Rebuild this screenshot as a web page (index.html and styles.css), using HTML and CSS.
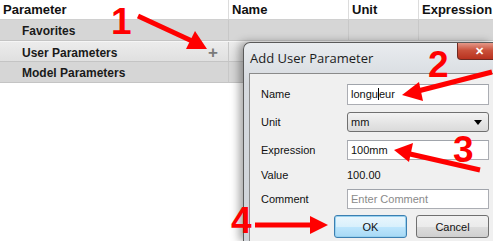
FILE: index.html
```html
<!DOCTYPE html>
<html lang="en">
<head>
    <meta charset="UTF-8">
    <title>Parameters</title>
    <link rel="stylesheet" href="styles.css">
</head>
<body>
    <!-- Parameter table -->
    <div class="grid">
        <div class="head">
            <div class="col c1">Parameter</div>
            <div class="col c2">Name</div>
            <div class="col c3">Unit</div>
            <div class="col c4">Expression</div>
        </div>
        <div class="row">
            <div class="col c1"><span class="group">Favorites</span></div>
            <div class="col c2"></div>
            <div class="col c3"></div>
            <div class="col c4"></div>
        </div>
        <div class="row current">
            <div class="col c1"><span class="group">User Parameters</span><span class="plus">+</span></div>
            <div class="col c2"></div>
            <div class="col c3"></div>
            <div class="col c4"></div>
        </div>
        <div class="row">
            <div class="col c1"><span class="group">Model Parameters</span></div>
            <div class="col c2"></div>
            <div class="col c3"></div>
            <div class="col c4"></div>
        </div>
    </div>

    <!-- Add User Parameter dialog -->
    <div class="dialog">
        <div class="titlebar">
            <span class="title">Add User Parameter</span>
            <button class="close">&#x2715;</button>
        </div>
        <div class="body">
            <div class="field">
                <label>Name</label>
                <div class="input">longu<span class="caret"></span>eur</div>
            </div>
            <div class="field">
                <label>Unit</label>
                <div class="select">mm<span class="arrow"></span></div>
            </div>
            <div class="field">
                <label>Expression</label>
                <div class="input">100mm</div>
            </div>
            <div class="field value">
                <label>Value</label>
                <span>100.00</span>
            </div>
            <div class="field">
                <label>Comment</label>
                <div class="input placeholder">Enter Comment</div>
            </div>
            <div class="buttons">
                <button class="btn ok">OK</button>
                <button class="btn">Cancel</button>
            </div>
        </div>
    </div>

    <!-- Red annotations -->
    <svg class="notes" width="493" height="241" viewBox="0 0 493 241">
        <g fill="#ff0000" stroke="#ff0000">
            <line x1="138" y1="16" x2="192" y2="41" stroke-width="5"/>
            <polygon points="207,49 186,49 195,31" stroke="none"/>
            <line x1="492" y1="72" x2="418" y2="91" stroke-width="5"/>
            <polygon points="402,95 419,82 423,101" stroke="none"/>
            <line x1="480" y1="170" x2="410" y2="154" stroke-width="5"/>
            <polygon points="394,150 413,143 409,162" stroke="none"/>
            <line x1="255" y1="225" x2="312" y2="225" stroke-width="5"/>
            <polygon points="328,225 310,216 310,234" stroke="none"/>
        </g>
        <g class="num">
            <text x="111" y="34">1</text>
            <text x="428" y="77">2</text>
            <text x="453" y="162">3</text>
            <text x="231" y="233">4</text>
        </g>
    </svg>
</body>
</html>
```

FILE: styles.css
```css
body {
    margin: 0;
    width: 493px;
    height: 241px;
    overflow: hidden;
    position: relative;
    background: #fff;
    font-family: "Liberation Sans", Arial, sans-serif;
}

/* Table */
.grid {
    width: 493px;
}

.head, .row {
    display: flex;
}

.head {
    height: 19px;
    border-bottom: 1px solid #d0d0d0;
    font-weight: bold;
    font-size: 13px;
    color: #111;
}

.head .col {
    line-height: 19px;
    padding-left: 3px;
}

.col {
    box-sizing: border-box;
    border-right: 1px solid #dcdcdc;
}

.c1 { width: 229px; }
.c2 { width: 120px; }
.c3 { width: 70px; }
.c4 { flex: 1; border-right: none; }

.row {
    height: 20px;
    background: #d6d6d6;
    border-bottom: 1px solid #c4c4c4;
}

.row .col {
    border-right-color: #c8c8c8;
}

.row .c1 {
    margin-left: 18px;
    width: 211px;
    display: flex;
    align-items: center;
    justify-content: space-between;
    padding-left: 4px;
    padding-right: 10px;
    padding-top: 2px;
}

.row.current {
    background: linear-gradient(#ececec, #e0e0e0);
    border-top: 1px solid #f6f6f6;
    height: 19px;
}

.group {
    font-weight: bold;
    font-size: 12px;
    color: #1a1a1a;
}

.plus {
    font-size: 17px;
    font-weight: bold;
    color: #7a7a7a;
    line-height: 1;
}

/* Dialog */
.dialog {
    position: absolute;
    left: 243px;
    top: 42px;
    width: 250px;
    height: 199px;
    box-sizing: border-box;
    overflow: hidden;
    border: 1px solid #5a5a5a;
    border-right: none;
    border-bottom: none;
    border-radius: 7px 0 0 0;
    background: linear-gradient(#e9ecef, #d6dadf 40px, #cfd3d8);
    box-shadow: -4px 0 8px rgba(0, 0, 0, 0.35);
    padding-left: 5px;
    font-family: "Liberation Sans", Tahoma, sans-serif;
    font-size: 11px;
    color: #111;
}

.titlebar {
    height: 30px;
    display: flex;
    align-items: center;
    position: relative;
}

.title {
    font-family: "Open Sans", "Liberation Sans", sans-serif;
    font-size: 13px;
    color: #1c1c1c;
    padding-left: 1px;
}

.close {
    position: absolute;
    top: -1px;
    left: 208px;
    width: 44px;
    height: 18px;
    border: 1px solid #6e2a22;
    border-top: none;
    border-radius: 0 0 4px 4px;
    background: linear-gradient(#e8a293, #c9503a 50%, #b8321f);
    color: #fff;
    font-size: 11px;
    font-weight: bold;
    padding: 0;
    line-height: 16px;
}

.body {
    background: #f0f0f0;
    border: 1px solid #8a8a8a;
    border-right: none;
    border-bottom: none;
    height: 168px;
    box-sizing: border-box;
    padding: 9px 0 0 11px;
}

.field {
    display: flex;
    align-items: center;
    height: 22px;
    margin-bottom: 6px;
}

.field label {
    width: 86px;
    flex: none;
}

.input, .select {
    box-sizing: border-box;
    width: 142px;
    height: 20px;
    line-height: 18px;
    border: 1px solid #abadb3;
    border-top-color: #a0a4ab;
    background: #fff;
    padding-left: 3px;
}

.field:first-child .input {
    height: 21px;
}

.caret {
    display: inline-block;
    width: 1px;
    height: 12px;
    background: #000;
    vertical-align: -2px;
}

.select {
    position: relative;
    border-color: #707070;
    border-radius: 3px;
    background: linear-gradient(#f3f3f3, #e6e6e6 50%, #dadada);
}

.arrow {
    position: absolute;
    right: 6px;
    top: 7px;
    border-left: 4px solid transparent;
    border-right: 4px solid transparent;
    border-top: 5px solid #000;
}

.field.value {
    height: 16px;
    margin-bottom: 5px;
}

.placeholder {
    color: #8a8a8a;
}

.buttons {
    display: flex;
    gap: 9px;
    margin-left: 73px;
    margin-top: -1px;
}

.btn {
    width: 73px;
    height: 23px;
    border: 1px solid #707070;
    border-radius: 3px;
    background: linear-gradient(#f2f2f2, #ebebeb 50%, #dddddd 51%, #cfcfcf);
    font-family: "Liberation Sans", Tahoma, sans-serif;
    font-size: 11px;
    color: #111;
}

.btn.ok {
    border-color: #3c7fb1;
    background: linear-gradient(#eaf6fd, #d9f0fc 50%, #bee6fd 51%, #a7d9f5);
    box-shadow: inset 0 0 0 1px #98d1ef;
}

/* Annotations */
.notes {
    position: absolute;
    left: 0;
    top: 0;
}

.num text {
    font-family: "Liberation Sans", Arial, sans-serif;
    font-weight: bold;
    font-size: 37px;
    fill: #ff0000;
}
```
